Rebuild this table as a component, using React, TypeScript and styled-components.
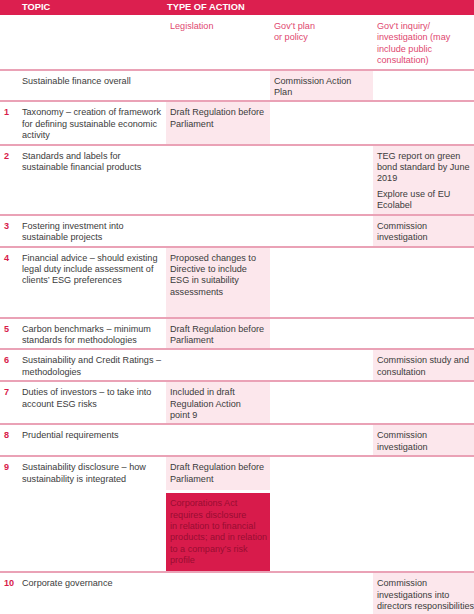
import { Fragment } from "react";
import { createGlobalStyle, styled } from "styled-components";

const GlobalStyle = createGlobalStyle`
  html, body {
    margin: 0;
    padding: 0;
    background: #fff;
  }
  body {
    font-family: "Liberation Sans", Arial, sans-serif;
    font-size: 9.1px;
    line-height: 11.4px;
    color: #3b3b3b;
  }
`;

const COLS = "18px 148px 104px 103px 101px";

const Table = styled.div`
  width: 474px;
  overflow: hidden;
`;

const HeadBar = styled.div`
  display: grid;
  grid-template-columns: ${COLS};
  height: 15px;
  align-items: center;
  background-color: #dc1f4f;
  color: #fff;
  font-weight: 700;
  font-size: 9.3px;
  text-transform: uppercase;
`;

const HeadTitle = styled.div<{ $span?: number; $pad?: number }>`
  grid-column: span ${({ $span }) => $span ?? 1};
  padding-left: ${({ $pad }) => $pad ?? 4}px;
`;

const Row = styled.div<{ $minHeight?: number }>`
  display: grid;
  grid-template-columns: ${COLS};
  border-bottom: 2px solid #eaa2b6;
  min-height: ${({ $minHeight }) => $minHeight ?? 0}px;
  &:last-child {
    border-bottom: none;
  }
`;

const Num = styled.div`
  padding: 5px 0 2px 4px;
  color: #d81b4a;
  font-weight: 700;
`;

const Topic = styled.div`
  padding: 5px 0 2px 4px;
  white-space: nowrap;
`;

const Cell = styled.div<{ $shade?: "light" | "dark"; $minHeight?: number }>`
  padding: 5px 0 2px 4px;
  min-height: ${({ $minHeight }) => $minHeight ?? 0}px;
  box-sizing: border-box;
  white-space: nowrap;
  background-color: ${({ $shade }) =>
    $shade === "light" ? "#fce7ec" : $shade === "dark" ? "#d81b4b" : "transparent"};
  color: ${({ $shade }) => ($shade === "dark" ? "#980d32" : "inherit")};
  p {
    margin: 0 0 4px;
  }
  p:last-child {
    margin-bottom: 0;
  }
`;

const SubHead = styled.div`
  padding: 6px 0 2px 4px;
  color: #e0476f;
  white-space: nowrap;
`;

const Stack = styled.div`
  display: flex;
  flex-direction: column;
  gap: 3px;
`;

type Lines = string[];
type Shaded = { paras: Lines[]; shade?: "light" | "dark" };

interface ITopicRow {
  num?: string;
  topic: Lines;
  legislation?: Shaded;
  plan?: Shaded;
  inquiry?: Shaded;
  minHeight?: number;
}

const draftReg: Shaded = { paras: [["Draft Regulation before", "Parliament"]], shade: "light" };
const investigation: Shaded = { paras: [["Commission", "investigation"]], shade: "light" };

const rows: ITopicRow[] = [
  {
    topic: ["Sustainable finance overall"],
    plan: { paras: [["Commission Action", "Plan"]], shade: "light" },
  },
  {
    num: "1",
    topic: ["Taxonomy – creation of framework", "for defining sustainable economic", "activity"],
    legislation: draftReg,
  },
  {
    num: "2",
    topic: ["Standards and labels for", "sustainable financial products"],
    inquiry: {
      paras: [
        ["TEG report on green", "bond standard by June", "2019"],
        ["Explore use of EU", "Ecolabel"],
      ],
      shade: "light",
    },
  },
  {
    num: "3",
    topic: ["Fostering investment into", "sustainable projects"],
    inquiry: investigation,
  },
  {
    num: "4",
    topic: [
      "Financial advice – should existing",
      "legal duty include assessment of",
      "clients’ ESG preferences",
    ],
    legislation: {
      paras: [["Proposed changes to", "Directive to include", "ESG in suitability", "assessments"]],
      shade: "light",
    },
    minHeight: 69,
  },
  {
    num: "5",
    topic: ["Carbon benchmarks – minimum", "standards for methodologies"],
    legislation: draftReg,
  },
  {
    num: "6",
    topic: ["Sustainability and Credit Ratings –", "methodologies"],
    inquiry: { paras: [["Commission study and", "consultation"]], shade: "light" },
  },
  {
    num: "7",
    topic: ["Duties of investors – to take into", "account ESG risks"],
    legislation: { paras: [["Included in draft", "Regulation Action", "point 9"]], shade: "light" },
  },
  {
    num: "8",
    topic: ["Prudential requirements"],
    inquiry: investigation,
  },
];

function LineText({ lines }: { lines: Lines }) {
  return (
    <>
      {lines.map((l, i) => (
        <Fragment key={i}>
          {i > 0 && <br />}
          {l}
        </Fragment>
      ))}
    </>
  );
}

function ShadedCell({ cell }: { cell?: Shaded }) {
  if (!cell) return <Cell />;
  return (
    <Cell $shade={cell.shade}>
      {cell.paras.map((p, i) => (
        <p key={i}>
          <LineText lines={p} />
        </p>
      ))}
    </Cell>
  );
}

export default function App() {
  return (
    <>
      <GlobalStyle />
      <Table>
        <HeadBar>
          <span />
          <HeadTitle>Topic</HeadTitle>
          <HeadTitle $span={3} $pad={1}>
            Type of action
          </HeadTitle>
        </HeadBar>

        <Row>
          <span />
          <span />
          <SubHead>Legislation</SubHead>
          <SubHead>
            <LineText lines={["Gov’t plan", "or policy"]} />
          </SubHead>
          <SubHead>
            <LineText
              lines={["Gov’t inquiry/", "investigation (may", "include public", "consultation)"]}
            />
          </SubHead>
        </Row>

        {rows.map((r, i) => (
          <Row key={i} $minHeight={r.minHeight}>
            <Num>{r.num}</Num>
            <Topic>
              <LineText lines={r.topic} />
            </Topic>
            <ShadedCell cell={r.legislation} />
            <ShadedCell cell={r.plan} />
            <ShadedCell cell={r.inquiry} />
          </Row>
        ))}

        <Row>
          <Num>9</Num>
          <Topic>
            <LineText lines={["Sustainability disclosure – how", "sustainability is integrated"]} />
          </Topic>
          <Stack>
            <Cell $shade="light" $minHeight={33}>
              <LineText lines={["Draft Regulation before", "Parliament"]} />
            </Cell>
            <Cell $shade="dark" $minHeight={78}>
              <LineText
                lines={[
                  "Corporations Act",
                  "requires disclosure",
                  "in relation to financial",
                  "products; and in relation",
                  "to a company’s risk",
                  "profile",
                ]}
              />
            </Cell>
          </Stack>
          <Cell />
          <Cell />
        </Row>

        <Row>
          <Num>10</Num>
          <Topic>Corporate governance</Topic>
          <Cell />
          <Cell />
          <Cell $shade="light">
            <LineText lines={["Commission", "investigations into", "directors responsibilities"]} />
          </Cell>
        </Row>
      </Table>
    </>
  );
}
